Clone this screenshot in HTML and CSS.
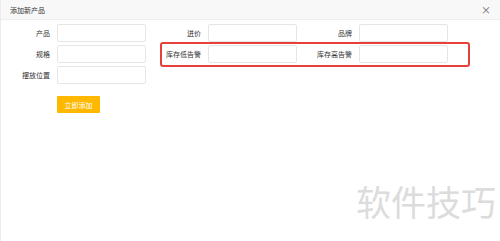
FILE: index.html
```html
<!DOCTYPE html>
<html lang="zh-CN">
<head>
  <meta charset="UTF-8" />
  <meta name="viewport" content="width=device-width, initial-scale=1" />
  <title>添加新产品</title>
  <link rel="stylesheet" href="styles.css">
</head>
<body>

  <div class="dialog">
    <div class="dialog-title">
      <span>添加新产品</span>
      <span class="close">&#215;</span>
    </div>

    <div class="dialog-body">
      <div class="form-grid">
        <div class="form-item">
          <label>产品</label>
          <input type="text" />
        </div>
        <div class="form-item">
          <label>进价</label>
          <input type="text" />
        </div>
        <div class="form-item">
          <label>品牌</label>
          <input type="text" />
        </div>
        <div class="form-item">
          <label>规格</label>
          <input type="text" />
        </div>
        <div class="form-item">
          <label>库存低告警</label>
          <input type="text" />
        </div>
        <div class="form-item">
          <label>库存高告警</label>
          <input type="text" />
        </div>
        <div class="form-item">
          <label>摆放位置</label>
          <input type="text" />
        </div>
      </div>

      <div class="form-actions">
        <button class="btn-warm">立即添加</button>
      </div>

      <!-- annotation around the stock alert fields -->
      <div class="highlight"></div>
    </div>

    <div class="watermark">软件技巧</div>
  </div>

</body>
</html>
```

FILE: styles.css
```css
html, body {
  margin: 0;
  padding: 0;
}
body {
  font-family: "Noto Sans CJK SC", "Noto Sans", sans-serif;
  background: #fff;
  color: #333;
}
.dialog {
  position: relative;
  width: 500px;
  height: 241px;
  box-sizing: border-box;
  border-left: 1px solid #ececec;
  overflow: hidden;
}
.dialog-title {
  height: 20px;
  box-sizing: border-box;
  background: #f8f8f8;
  border-bottom: 1px solid #eee;
  display: flex;
  align-items: center;
  justify-content: space-between;
  padding: 0 9px 0 9px;
  font-size: 7px;
  color: #333;
}
.dialog-title .close {
  font-size: 10px;
  color: #666;
  line-height: 1;
}
.dialog-body {
  position: relative;
  padding-top: 4px;
}
.form-grid {
  display: grid;
  grid-template-columns: repeat(3, 146px);
  column-gap: 5px;
  row-gap: 3px;
}
.form-item {
  display: flex;
  align-items: center;
}
.form-item label {
  width: 49px;
  padding-right: 7px;
  text-align: right;
  font-size: 7px;
  color: #333;
  white-space: nowrap;
}
.form-item input {
  width: 89px;
  height: 18px;
  box-sizing: border-box;
  border: 1px solid #e6e6e6;
  border-radius: 2px;
  padding: 0 4px;
  font-size: 7px;
  outline: none;
}
.form-actions {
  display: flex;
  padding: 12px 0 0 56px;
}
.btn-warm {
  width: 43px;
  height: 17px;
  border: none;
  border-radius: 1px;
  background: #ffb800;
  color: #fff;
  font-family: inherit;
  font-size: 7px;
  padding: 0;
  cursor: pointer;
}
.highlight {
  position: absolute;
  left: 159px;
  top: 22px;
  width: 310px;
  height: 25px;
  box-sizing: border-box;
  border: 2px solid #e6403a;
  border-radius: 3px;
  pointer-events: none;
}
.watermark {
  position: absolute;
  left: 355px;
  top: 180px;
  font-size: 35px;
  line-height: 1.2;
  color: #dcdcdc;
  letter-spacing: 0;
  white-space: nowrap;
}
```
